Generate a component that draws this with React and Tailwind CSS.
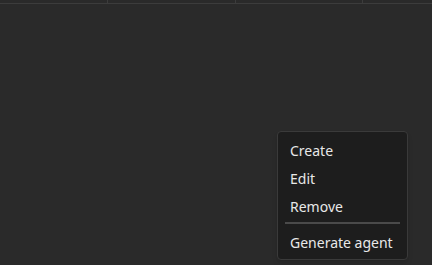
export default function App() {
  const items = ["Create", "Edit", "Remove"];
  return (
    <div
      className="w-[432px] h-[265px] bg-[#2a2a2a] flex flex-col overflow-hidden"
      style={{ fontFamily: "'Noto Sans', 'Open Sans', sans-serif" }}
    >
      {/* column headers, scrolled almost out of view */}
      <div className="h-[4px] flex border-b border-[#3c3c3c] shrink-0">
        <div className="w-[108px] border-r border-[#3c3c3c]" />
        <div className="w-[128px] border-r border-[#3c3c3c]" />
        <div className="w-[127px] border-r border-[#3c3c3c]" />
        <div className="flex-1" />
      </div>

      <div className="flex-1 flex justify-end items-end pr-[24px] pb-[5px]">
        <div className="w-[131px] bg-[#1d1d1d] border border-[#3a3a3a] rounded-[4px] pt-[4px] pb-[3px] px-[7px] text-[14px] text-[#e8e8e8] shadow-md">
          {items.map((t) => (
            <div key={t} className="h-[28px] flex items-center px-[5px]">
              {t}
            </div>
          ))}
          <div className="h-[2px] bg-[#4a4a4a] mt-[2px] mb-[4px]" />
          <div className="h-[28px] flex items-center px-[5px]">Generate agent</div>
        </div>
      </div>
    </div>
  );
}
